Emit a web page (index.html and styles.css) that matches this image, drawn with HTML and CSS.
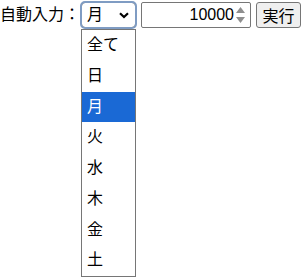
FILE: index.html
```html
<!DOCTYPE html>
<html lang="ja">
<head>
<meta charset="utf-8">
<link rel="stylesheet" href="styles.css">
</head>
<body>
<div class="row">
  <span class="label">自動入力：</span>
  <div class="select">
    <span class="sel-text">月</span>
    <svg class="chev" width="10" height="7" viewBox="0 0 10 7"><path d="M1 1.2 L5 5 L9 1.2" fill="none" stroke="#000" stroke-width="2.2"/></svg>
  </div>
  <div class="number">
    <span class="num-text">10000</span>
    <svg class="spin" width="11" height="20" viewBox="0 0 11 20"><path d="M1 8 L5.5 2 L10 8 Z" fill="#8f8f8f"/><path d="M1 12 L5.5 18 L10 12 Z" fill="#8f8f8f"/></svg>
  </div>
  <div class="btn">実行</div>
</div>
<div class="dropdown">
  <div class="opt">全て</div>
  <div class="opt">日</div>
  <div class="opt active">月</div>
  <div class="opt">火</div>
  <div class="opt">水</div>
  <div class="opt">木</div>
  <div class="opt">金</div>
  <div class="opt">土</div>
</div>
</body>
</html>
```
FILE: styles.css
```css
html, body {
  margin: 0;
  padding: 0;
  background: #fff;
}
body {
  font-family: "Liberation Sans", "Noto Sans CJK JP", sans-serif;
  font-size: 16px;
  color: #000;
}
.row {
  display: flex;
  align-items: center;
  padding-top: 1px;
  height: 27px;
}
.label {
  width: 80px;
  line-height: 26px;
}
.select {
  box-sizing: border-box;
  margin-left: 1px;
  width: 55px;
  height: 26px;
  border: 1px solid #767676;
  border-radius: 4px;
  outline: 2px solid #7f9cc3;
  outline-offset: -1px;
  display: flex;
  align-items: center;
  justify-content: space-between;
  padding: 0 6px 0 5px;
  background: #fff;
}
.sel-text {
  line-height: 20px;
}
.chev {
  display: block;
  margin-top: 1px;
}
.dropdown {
  box-sizing: border-box;
  width: 55px;
  margin-left: 81px;
  margin-top: 1px;
  border: 1px solid #767676;
  background: #fff;
}
.opt {
  height: 30.75px;
  line-height: 30.75px;
  padding-left: 5px;
}
.opt.active {
  background: #1a69d5;
  color: #fff;
}
.number {
  box-sizing: border-box;
  margin-left: 5px;
  width: 110px;
  height: 26px;
  border: 1px solid #767676;
  border-radius: 2px;
  display: flex;
  align-items: center;
  justify-content: flex-end;
  padding-right: 4px;
  margin-top: 1px;
}
.num-text {
  line-height: 20px;
}
.spin {
  display: block;
  margin-left: 1px;
}
.btn {
  box-sizing: border-box;
  margin-left: 5px;
  height: 26px;
  width: 45px;
  border: 1px solid #767676;
  border-radius: 3px;
  background: #efefef;
  display: flex;
  align-items: center;
  justify-content: center;
  margin-top: 1px;
}
```
